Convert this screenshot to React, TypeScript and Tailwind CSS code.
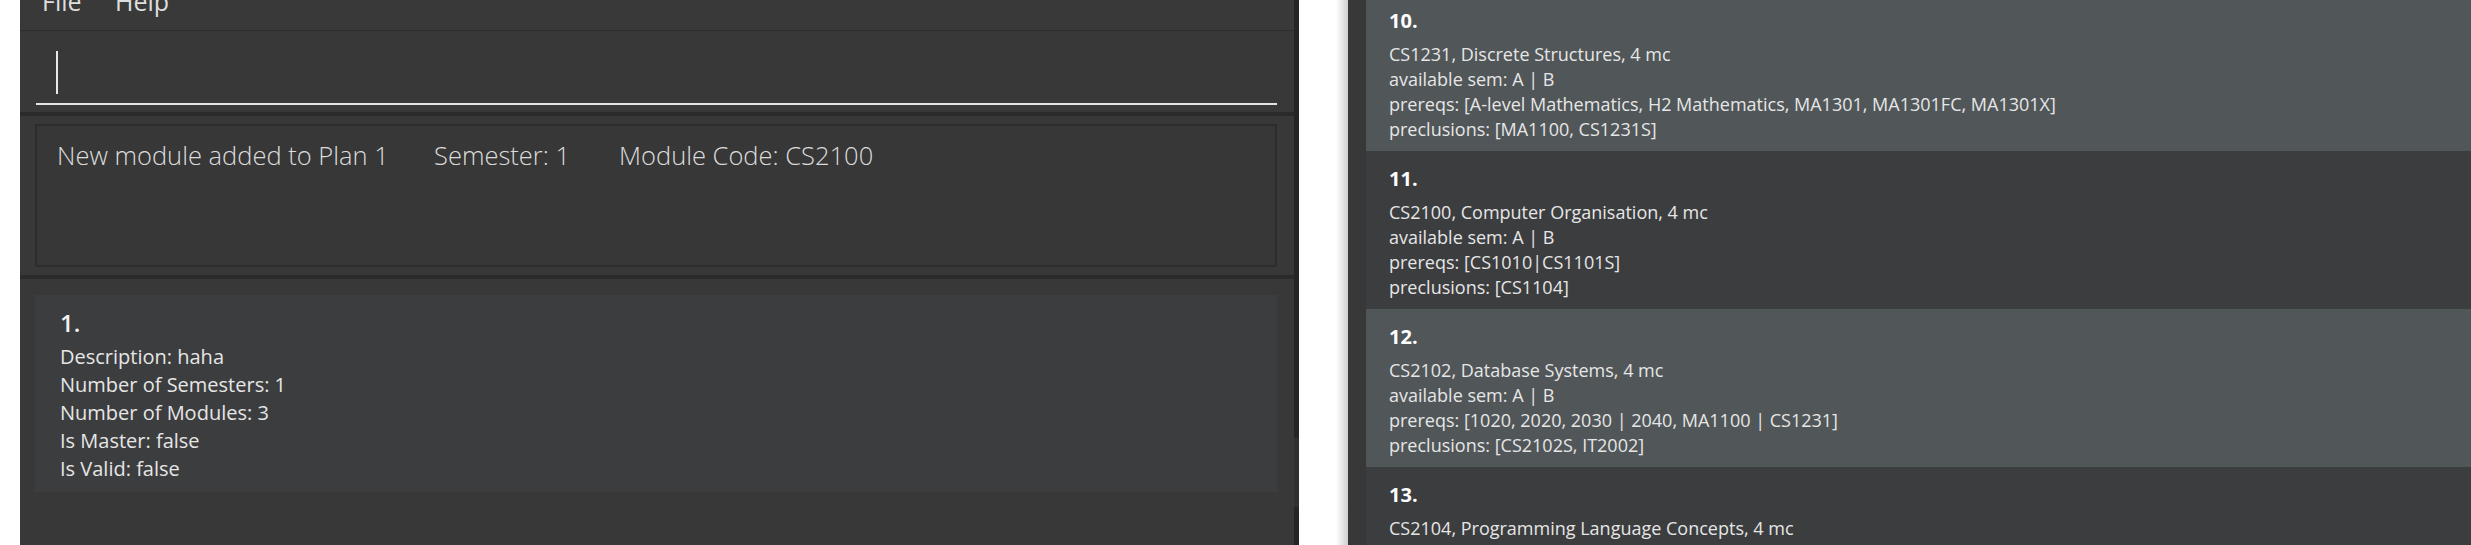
import React from 'react';

interface ModuleItem {
    index: number;
    title: string;
    sems: string;
    prereqs: string;
    preclusions: string;
}

const MODULES: ModuleItem[] = [
    { index: 10, title: 'CS1231, Discrete Structures, 4 mc', sems: 'A | B', prereqs: '[A-level Mathematics, H2 Mathematics, MA1301, MA1301FC, MA1301X]', preclusions: '[MA1100, CS1231S]' },
    { index: 11, title: 'CS2100, Computer Organisation, 4 mc', sems: 'A | B', prereqs: '[CS1010|CS1101S]', preclusions: '[CS1104]' },
    { index: 12, title: 'CS2102, Database Systems, 4 mc', sems: 'A | B', prereqs: '[1020, 2020, 2030 | 2040, MA1100 | CS1231]', preclusions: '[CS2102S, IT2002]' },
    { index: 13, title: 'CS2104, Programming Language Concepts, 4 mc', sems: 'A | B', prereqs: '[CS2030 | CS2113/T]', preclusions: '[]' },
];

const PLAN_LINES = [
    'Description: haha',
    'Number of Semesters: 1',
    'Number of Modules: 3',
    'Is Master: false',
    'Is Valid: false',
];

const ModuleCard: React.FC<{ item: ModuleItem; odd: boolean }> = ({ item, odd }) => (
    <div className={`h-[158px] shrink-0 pl-[23px] pt-[13px] ${odd ? 'bg-[#515659]' : 'bg-[#3c3d3f]'}`}>
        <div className="text-[20px] leading-[30px] font-bold text-white">{item.index}.</div>
        <div className="mt-[6px] text-[18px] leading-[25px] text-[#e6e6e6] whitespace-nowrap">
            <div>{item.title}</div>
            <div>available sem: {item.sems}</div>
            <div>prereqs: {item.prereqs}</div>
            <div>preclusions: {item.preclusions}</div>
        </div>
    </div>
);

const PlannerWindow: React.FC = () => (
    <div className="flex w-[1279px] shrink-0 h-full">
        <div className="flex flex-col w-[1274px] bg-[#383838]">
            {/* menu bar */}
            <div className="h-[31px] shrink-0 overflow-hidden border-b border-[#2c2c2c] bg-[#393939]">
                <div className="-mt-[14px] flex pl-[22px] text-[25px] leading-[30px] text-[#dedede]">
                    <span className="w-[73px]">File</span>
                    <span>Help</span>
                </div>
            </div>

            {/* command box */}
            <div className="h-[81px] shrink-0 pl-[16px] pr-[17px]">
                <div className="flex pl-[20px] pt-[20px] pb-[9px] border-b-2 border-[#e4e4e4]">
                    <div className="w-[2px] h-[43px] bg-[#e8e8e8]" />
                </div>
            </div>
            <div className="h-[4px] shrink-0 bg-[#2b2b2b]" />

            {/* result display */}
            <div className="h-[159px] shrink-0 pl-[15px] pr-[17px] pt-[8px] pb-[8px]">
                <div className="h-full border-2 border-[#2d2d2d] bg-[#373737] pl-[20px] pt-[12px] flex text-[25.5px] leading-[35px] font-light text-[#dcdcdc] whitespace-nowrap">
                    <span className="w-[377px]">New module added to Plan 1</span>
                    <span className="w-[185px]">Semester: 1</span>
                    <span>Module Code: CS2100</span>
                </div>
            </div>
            <div className="h-[4px] shrink-0 bg-[#2b2b2b]" />

            {/* plan list */}
            <div className="flex-1 pl-[15px] pr-[17px] pt-[16px]">
                <div className="h-[197px] bg-[#3c3d3f] pl-[25px] pt-[13px]">
                    <div className="text-[24px] leading-[30px] font-semibold text-[#f2f2f2]">1.</div>
                    <div className="mt-[5px] text-[20px] leading-[28px] text-[#e6e6e6]">
                        {PLAN_LINES.map(line => (
                            <div key={line}>{line}</div>
                        ))}
                    </div>
                </div>
            </div>
        </div>
        <div className="flex flex-col w-[5px] bg-[#252525]">
            <div className="h-[438px]" />
            <div className="h-[69px] bg-[#303030]" />
        </div>
    </div>
);

export default function App() {
    return (
        <div className="flex w-[2471px] h-[545px] overflow-hidden bg-white font-['Open_Sans','Noto_Sans',sans-serif]">
            <div className="w-[20px] shrink-0" />
            <PlannerWindow />
            <div className="w-[49px] shrink-0 flex">
                <div className="flex-1" />
                <div className="w-[12px] bg-gradient-to-r from-white to-[#cfcfcf]" />
            </div>
            <div className="flex flex-1 bg-[#383838]">
                <div className="w-[18px] shrink-0" />
                <div className="flex-1 flex flex-col -mt-[7px]">
                    {MODULES.map((m, i) => (
                        <ModuleCard key={m.index} item={m} odd={i % 2 === 0} />
                    ))}
                </div>
            </div>
        </div>
    );
}
